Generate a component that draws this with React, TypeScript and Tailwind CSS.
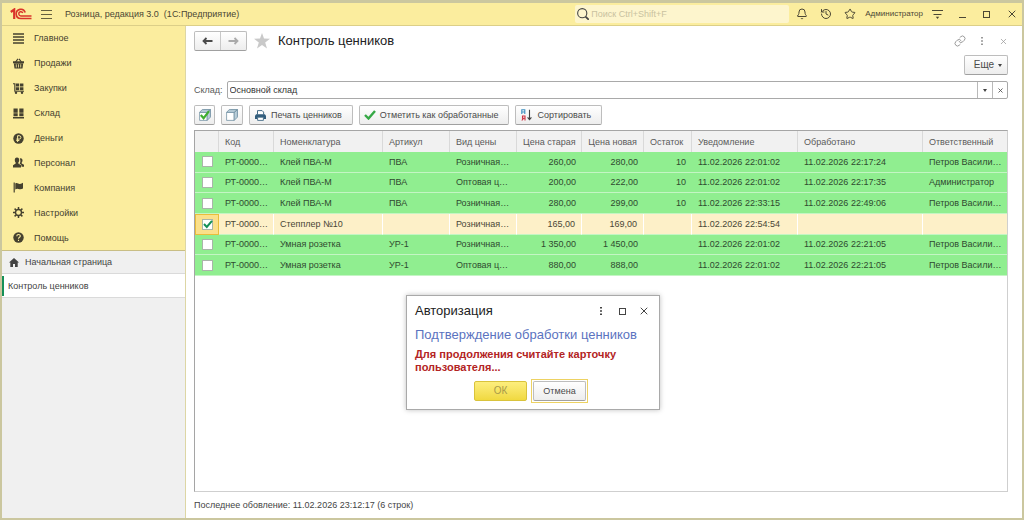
import React, { useState } from "react";
import { Bell, History, Link, Star, X } from "lucide-react";

type Row = {
  id: number;
  name: string;
  article: string;
  priceType: string;
  oldPrice: string;
  newPrice: string;
  rest: string;
  notified: string;
  processed: string;
  user: string;
};

const rows: Row[] = [
  { id: 1, name: "Клей ПВА-М", article: "ПВА", priceType: "Розничная…", oldPrice: "260,00", newPrice: "280,00", rest: "10", notified: "11.02.2026 22:01:02", processed: "11.02.2026 22:17:24", user: "Петров Васили…" },
  { id: 2, name: "Клей ПВА-М", article: "ПВА", priceType: "Оптовая ц…", oldPrice: "200,00", newPrice: "222,00", rest: "10", notified: "11.02.2026 22:01:02", processed: "11.02.2026 22:17:35", user: "Администратор" },
  { id: 3, name: "Клей ПВА-М", article: "ПВА", priceType: "Розничная…", oldPrice: "280,00", newPrice: "299,00", rest: "10", notified: "11.02.2026 22:33:15", processed: "11.02.2026 22:49:06", user: "Петров Васили…" },
  { id: 4, name: "Степплер №10", article: "", priceType: "Розничная…", oldPrice: "165,00", newPrice: "169,00", rest: "", notified: "11.02.2026 22:54:54", processed: "", user: "" },
  { id: 5, name: "Умная розетка", article: "УР-1", priceType: "Розничная…", oldPrice: "1 350,00", newPrice: "1 450,00", rest: "", notified: "11.02.2026 22:01:02", processed: "11.02.2026 22:21:05", user: "Петров Васили…" },
  { id: 6, name: "Умная розетка", article: "УР-1", priceType: "Оптовая ц…", oldPrice: "880,00", newPrice: "888,00", rest: "", notified: "11.02.2026 22:01:02", processed: "11.02.2026 22:21:05", user: "Петров Васили…" },
];

const columns = [
  { title: "", width: "w-[24px]", right: false },
  { title: "Код", width: "w-[55px]", right: false },
  { title: "Номенклатура", width: "w-[109px]", right: false },
  { title: "Артикул", width: "w-[67px]", right: false },
  { title: "Вид цены", width: "w-[67px]", right: false },
  { title: "Цена старая", width: "w-[65px]", right: true },
  { title: "Цена новая", width: "w-[62px]", right: true },
  { title: "Остаток", width: "w-[48px]", right: false },
  { title: "Уведомление", width: "w-[106px]", right: false },
  { title: "Обработано", width: "w-[125px]", right: false },
  { title: "Ответственный", width: "", right: false },
];

const sections = [
  { title: "Главное", icon: <path d="M0 1h11M0 4h11M0 7h11M0 10h11" stroke="currentColor" strokeWidth="1.6" /> },
  {
    title: "Продажи",
    icon: (
      <>
        <path d="M2.5 4 5 .8M8.5 4 6 .8" stroke="currentColor" strokeWidth="1.2" />
        <path d="M0 3.2h11v2H0zM.8 5.6h9.4L9.5 10.5h-8z" fill="currentColor" />
        <path d="M3.3 6.3v3.2M5.5 6.3v3.2M7.7 6.3v3.2" stroke="#fbed9e" strokeWidth=".8" />
      </>
    ),
  },
  {
    title: "Закупки",
    icon: (
      <>
        <path d="M0 .8h1.8v7.4H11" fill="none" stroke="currentColor" strokeWidth="1.1" />
        <path d="M2.8.5h3.4v3H2.8zM7 .5h3.4v3H7zM2.8 4.2h3.4v3H2.8zM7 4.2h3.4v3H7z" fill="currentColor" />
        <circle cx="3" cy="9.8" r="1.2" fill="currentColor" />
        <circle cx="9" cy="9.8" r="1.2" fill="currentColor" />
      </>
    ),
  },
  {
    title: "Склад",
    icon: <path d="M.5.5h4.2v4.2H.5zM6.3.5h4.2v4.2H6.3zM.5 5.3h4.2v3H.5zM6.3 5.3h4.2v3H6.3zM0 9h11v1.5H0z" fill="currentColor" />,
  },
  {
    title: "Деньги",
    icon: (
      <>
        <circle cx="5.5" cy="5.5" r="5.2" fill="currentColor" />
        <path d="M4.6 9V2.7h1.6a1.7 1.7 0 0 1 0 3.4H3.3M3.3 7.5h3" fill="none" stroke="#fbed9e" />
      </>
    ),
  },
  {
    title: "Персонал",
    icon: (
      <>
        <path d="M7.6 1.2c1.4 0 2 1 1.9 2.3 0 1-.5 1.6-.8 2v1l2.3 1.2v2.1H8.6c0-2-.6-2.3-2-3 .8-1 1.2-3.7.2-5.4z" fill="currentColor" />
        <path d="M4 .5c1.6 0 2.300 1.200 2.200 2.700 0 1.200-.6 2-.9 2.400v1l2.700 1.600v2.300H0V8.200l2.700-1.600v-1c-.4-.4-.9-1.200-.9-2.400C1.700 1.700 2.400.5 4 .5z" fill="currentColor" />
      </>
    ),
  },
  {
    title: "Компания",
    icon: (
      <>
        <path d="M1.2.5v10" stroke="currentColor" strokeWidth="1.2" />
        <path d="M2.3 1.5c2-1.2 3 .8 4.7.5C8.2 1.8 9 1.2 10 .8v5.7c-1.2.6-2.3 1-3.5.7-1.5-.4-2.5-.8-4.2.2z" fill="currentColor" />
      </>
    ),
  },
  {
    title: "Настройки",
    icon: (
      <>
        <circle cx="5.5" cy="5.5" r="3" fill="none" stroke="currentColor" strokeWidth="1.4" />
        <path d="M5.5 0v2M5.5 9v2M0 5.5h2M9 5.5h2M1.6 1.6 3 3M8 8l1.4 1.4M1.6 9.4 3 8M8 3l1.4-1.4" stroke="currentColor" strokeWidth="1.5" />
      </>
    ),
  },
  {
    title: "Помощь",
    icon: (
      <>
        <circle cx="5.5" cy="5.5" r="5.2" fill="currentColor" />
        <path d="M3.8 4.2c0-2.3 3.5-2.3 3.5-.2 0 1.3-1.8 1.3-1.8 2.7M5.5 7.7v1.2" fill="none" stroke="#fbed9e" strokeWidth="1.1" />
      </>
    ),
  },
];

const buttonStyle =
  "h-5 flex items-center rounded-xs border border-[#bdbdbd] border-b-[#a0a0a0] bg-linear-to-b from-white to-[#ededed] text-[#4a4a4a]";

function Logo() {
  return (
    <svg className="w-[22px] h-3" viewBox="0 0 22 12" fill="none" stroke="#d9342b">
      <path d="M.8 4 4.200 1.500V11" strokeWidth="2.200" />
      <path d="M15.200 4.500A4.600 4.600 0 1 0 10.800 10.500H21.500" strokeWidth="1.600" />
      <path d="M12.800 5A2.100 2.100 0 1 0 10.800 7.900H21.500" strokeWidth="1.500" />
    </svg>
  );
}

function Cubes({ checked }: { checked?: boolean }) {
  return (
    <svg className="w-3 h-3" viewBox="0 0 12 12" stroke="#7593a5" strokeWidth=".8">
      <path d="M2.600 2.800 4.800.6h6.600v6.800L9 9.600" fill="#c9dbe4" />
      <path d="M.6 3.400h7.600v8H.6z" fill="#fff" />
      <path d="M.6 3.400 3.200.6h8.200L8.200 3.400zM8.200 3.400 11.400.6v7.600l-3.200 3.200z" fill="#b9ced9" />
      {checked && <path d="m1.800 6 2.800 3.200L10 2.200" fill="none" stroke="#3fae2f" strokeWidth="2.200" />}
    </svg>
  );
}

function Printer() {
  return (
    <svg className="w-[11px] h-[11px]" viewBox="0 0 11 11">
      <path d="M2.500 4.500V.6h4.600l1.500 1.500v2.400" fill="#fff" stroke="#456c87" />
      <path d="M1.200 4.200h8.600L11 5.400V9H0V5.400z" fill="#315d7d" />
      <path d="M2.600 7.200h5.800v3.200H2.600z" fill="#fff" stroke="#456c87" strokeWidth=".9" />
    </svg>
  );
}

function SortIcon() {
  return (
    <svg className="w-3 h-3" viewBox="0 0 12 12" fill="none">
      <path d="M.8 5V.8h3V5M.8 3h3" stroke="#3c8fc0" strokeWidth="1.100" />
      <path d="M4 11.500V7H1.500v2.300H4M2.500 9.300.8 11.500" stroke="#cc3344" strokeWidth="1.100" />
      <path d="M8.500.8v9.700M6.600 8.300l1.900 2.400 1.900-2.400" stroke="#444" strokeWidth="1.100" />
    </svg>
  );
}

function Arrow({ className }: { className: string }) {
  return (
    <svg className={className} viewBox="0 0 11 8" fill="none" stroke="currentColor" strokeWidth="1.800">
      <path d="M10.500 4H1.500M4.500 1 1.500 4l3 3" />
    </svg>
  );
}

function Caret() {
  return <svg className="w-1 h-[3px]" viewBox="0 0 4 3"><path d="M0 0h4L2 3z" fill="#444" /></svg>;
}

function Dots({ className }: { className: string }) {
  return (
    <svg className={className} viewBox="0 0 2 8" fill="currentColor">
      <path d="M0 0h2v1.500H0zM0 3.200h2v1.500H0zM0 6.400h2v1.500H0z" />
    </svg>
  );
}

function TitleBar() {
  return (
    <header className="h-[23px] shrink-0 flex items-center pl-2 pr-1 bg-[#fbed9e] border-b border-[#dccf88]">
      <Logo />
      <button aria-label="Меню" className="ml-2 w-3 flex justify-center">
        <svg className="w-[11px] h-[9px]" viewBox="0 0 11 9" stroke="#65603f"><path d="M0 .5h11M0 4.500h11M0 8.500h11" /></svg>
      </button>
      <h1 className="ml-[13px] grow whitespace-pre text-[#4b4734]">Розница, редакция 3.0  (1С:Предприятие)</h1>
      <label className="w-[214px] h-[18px] flex items-center gap-0.5 pl-0.5 rounded-xs bg-[#fdf5cd]">
        <svg className="w-3 h-3" viewBox="0 0 11 11" fill="none" stroke="#444"><circle cx="4.800" cy="4.800" r="4.200" /><path d="m7.800 7.800 3 3" strokeWidth="1.600" /></svg>
        <input aria-label="Поиск" placeholder="Поиск Ctrl+Shift+F" className="grow min-w-0 outline-none placeholder:text-[#c9c2a0]" />
      </label>
      <div className="flex items-center text-[#4b4734]">
        <button aria-label="Уведомления" className="ml-[7px]"><Bell size={12} strokeWidth={2} /></button>
        <button aria-label="История" className="ml-3"><History size={12} strokeWidth={2} /></button>
        <button aria-label="Избранное" className="ml-3"><Star size={12} strokeWidth={2} /></button>
        <button className="ml-[9px] text-[8px]">Администратор</button>
        <button aria-label="Сервис" className="ml-[9px]">
          <svg className="w-[11px] h-[9px]" viewBox="0 0 11 9"><path d="M0 .5h11M1.500 4.500h8" stroke="currentColor" /><path d="M3.800 6.800h3.400L5.500 9z" fill="currentColor" /></svg>
        </button>
        <button aria-label="Свернуть" className="ml-4">
          <svg className="w-[7px] h-[7px]" viewBox="0 0 7 7" stroke="currentColor"><path d="M0 6.500h7" /></svg>
        </button>
        <button aria-label="Развернуть" className="ml-[17px] w-[7px] h-[7px] border border-current" />
        <button aria-label="Закрыть" className="ml-4"><X size={12} strokeWidth={2} /></button>
      </div>
    </header>
  );
}

function Sidebar() {
  return (
    <aside className="w-[184px] shrink-0 flex flex-col bg-[#f0f0f0] border-r border-[#ddd6a4]">
      <nav className="h-[225px] flex flex-col bg-[#fbed9e] border-b border-[#c9be85]">
        {sections.map((section) => (
          <a key={section.title} href="#" className="flex-1 flex items-center gap-[10px] pl-[11px] text-[#45412f]">
            <svg className="w-[11px] h-[11px]" viewBox="0 0 11 11">{section.icon}</svg>
            {section.title}
          </a>
        ))}
      </nav>
      <a href="#" className="h-[23px] flex items-center gap-[6px] pl-[7px] text-[#444] border-b border-[#dadada]">
        <svg className="w-[10px] h-[9px]" viewBox="0 0 10 9" fill="#444"><path d="M5 0 0 4.500h1.300V9H4V6h2v3h2.700V4.500H10z" /></svg>
        Начальная страница
      </a>
      <a href="#" className="h-6 flex items-center gap-1 bg-white text-[#444] border-b border-[#dadada]">
        <span className="w-0.5 h-5 bg-[#159058]" />
        Контроль ценников
      </a>
    </aside>
  );
}

function PriceTable() {
  const [checked, setChecked] = useState<number[]>([4]);

  const toggle = (id: number) =>
    setChecked((prev) => (prev.includes(id) ? prev.filter((x) => x !== id) : [...prev, id]));

  return (
    <div className="grow mt-[5px] border border-[#cfcfcf] border-l-[#a5a5a5] border-t-[#a5a5a5]">
      <table className="w-full h-[145px] table-fixed border-separate border-spacing-0 text-left">
        <thead>
          <tr className="h-[21px] bg-[#f1f1f1] text-[#5a5a5a]">
            {columns.map((col, i) => (
              <th
                key={i}
                className={`${col.width} ${col.right ? "text-right" : ""} px-[6px] font-normal whitespace-nowrap border-r border-[#d9d9d9] last:border-r-0`}
              >
                {col.title}
              </th>
            ))}
          </tr>
        </thead>
        <tbody>
          {rows.map((row) => {
            const active = row.id === 4;
            const line = active ? "border-r border-r-white last:border-r-0" : "";
            return (
              <tr
                key={row.id}
                className={active ? "bg-[#fdf0c8] text-[#4a4636]" : "bg-[#90ee90] text-[#2f4a2f]"}
              >
                <td className={`p-0 border-b ${active ? "bg-[#fbe08a] border border-[#e9bd3a]" : "border-[#c4f5c4]"}`}>
                  <input
                    type="checkbox"
                    aria-label={row.name}
                    checked={checked.includes(row.id)}
                    onChange={() => toggle(row.id)}
                    className="peer sr-only"
                    id={`row-${row.id}`}
                  />
                  <label htmlFor={`row-${row.id}`} className="block w-[11px] h-[11px] mx-auto bg-white border border-[#a9b5a9]">
                    {checked.includes(row.id) && (
                      <svg className="w-[10px] h-[9px]" viewBox="0 0 10 9" fill="none" stroke="#159058" strokeWidth="2"><path d="m1 4 2.800 3L9 .8" /></svg>
                    )}
                  </label>
                </td>
                {[
                  "РТ-0000…",
                  row.name,
                  row.article,
                  row.priceType,
                  row.oldPrice,
                  row.newPrice,
                  row.rest,
                  row.notified,
                  row.processed,
                  row.user,
                ].map((value, i) => (
                  <td
                    key={i}
                    className={`px-[6px] py-0 whitespace-nowrap border-b border-b-[#c4f5c4] ${line} ${i >= 4 && i <= 6 ? "text-right" : ""}`}
                  >
                    {value}
                  </td>
                ))}
              </tr>
            );
          })}
        </tbody>
      </table>
    </div>
  );
}

function AuthDialog() {
  return (
    <div
      role="dialog"
      aria-label="Авторизация"
      className="absolute left-[406px] top-[295px] w-[254px] h-[115px] px-2 pt-[7px] flex flex-col bg-white border border-[#a9a9a9] shadow-[0_0_5px_rgba(0,0,0,0.25)]"
    >
      <div className="flex items-center text-[#444]">
        <h2 className="grow text-[13px] leading-4 text-[#222]">Авторизация</h2>
        <button aria-label="Еще"><Dots className="w-0.5 h-2" /></button>
        <button aria-label="Развернуть" className="ml-[17px] w-[7px] h-[7px] border border-current" />
        <button aria-label="Закрыть" className="ml-3 mr-px"><X size={12} strokeWidth={2} /></button>
      </div>
      <h3 className="mt-2 text-[13px] leading-4 text-[#5b73c0] whitespace-nowrap">Подтверждение обработки ценников</h3>
      <p className="mt-[5px] text-[11px] leading-[13px] font-bold text-[#b32424]">
        Для продолжения считайте карточку пользователя...
      </p>
      <div className="mt-[5px] flex justify-center items-center gap-1 pr-1">
        <button className="w-[53px] h-5 rounded-xs border border-[#d9c33c] bg-linear-to-b from-[#fdee7c] to-[#f0d93f] text-[10px] text-[#a89a4a]">ОК</button>
        <span className="p-px border border-[#edd262]">
          <button className={`${buttonStyle} w-[53px] justify-center`}>Отмена</button>
        </span>
      </div>
    </div>
  );
}

export default function App() {
  return (
    <div className="relative min-h-screen flex flex-col pt-[3px] pl-0.5 pr-0.5 pb-0.5 bg-[#cbc79f] text-[9px] leading-3 font-['Liberation_Sans',Arial,sans-serif]">
      <TitleBar />
      <div className="grow flex bg-white">
        <Sidebar />
        <main className="grow min-w-0 flex flex-col pl-2 pr-[14px] pt-[5px]">
          <div className="flex items-center">
            <div className={`${buttonStyle} w-[53px]`}>
              <button aria-label="Назад" className="flex-1 flex justify-center"><Arrow className="w-[11px] h-2" /></button>
              <span className="w-px self-stretch bg-[#c8c8c8]" />
              <button aria-label="Вперед" className="flex-1 flex justify-center text-[#aaa]"><Arrow className="w-[11px] h-2 rotate-180" /></button>
            </div>
            <svg className="ml-[7px] w-4 h-4" viewBox="0 0 16 16" fill="#c9c9c9"><path d="m8 0 2 5.600 6 .2-4.800 3.700L13 15.500 8 12l-5 3.500 1.800-6L0 5.800l6-.2z" /></svg>
            <h2 className="ml-2 grow text-[13px] leading-4 text-[#222]">Контроль ценников</h2>
            <div className="flex items-center text-[#9a9a9a]">
              <button aria-label="Ссылка"><Link size={12} strokeWidth={2} /></button>
              <button aria-label="Действия" className="ml-[15px]"><Dots className="w-0.5 h-2" /></button>
              <button aria-label="Закрыть" className="ml-4"><X size={9} strokeWidth={2} /></button>
            </div>
          </div>
          <button className={`${buttonStyle} w-[44px] mt-1 self-end justify-center gap-1 pl-1 text-[10px]`}>Еще <Caret /></button>
          <div className="mt-[6px] flex items-center gap-1">
            <label htmlFor="store" className="text-[#5a5a5a]">Склад:</label>
            <div className="grow h-[18px] flex rounded-xs border border-[#a9a9a9]">
              <input id="store" defaultValue="Основной склад" className="grow min-w-0 px-0.5 text-[#333] outline-none" />
              <button aria-label="Выбрать" className="w-[15px] flex items-center justify-center border-l border-[#b9b9b9]"><Caret /></button>
              <button aria-label="Очистить" className="w-[15px] flex items-center justify-center border-l border-[#b9b9b9] text-[#555]"><X size={7} strokeWidth={3} /></button>
            </div>
          </div>
          <div className="mt-[6px] flex gap-[6px]">
            <button aria-label="Отметить все" className={`${buttonStyle} w-[21px] justify-center`}><Cubes checked /></button>
            <button aria-label="Снять отметки" className={`${buttonStyle} w-[22px] justify-center`}><Cubes /></button>
            <button className={`${buttonStyle} gap-[5px] pl-[5px] pr-[10px]`}><Printer />Печать ценников</button>
            <button className={`${buttonStyle} gap-1 pl-1 pr-[10px]`}>
              <svg className="w-3 h-[10px]" viewBox="0 0 12 10" fill="none" stroke="#35a845" strokeWidth="2.400"><path d="m1 5 3.500 3.500L11 1" /></svg>
              Отметить как обработанные
            </button>
            <button className={`${buttonStyle} gap-1 pl-[5px] pr-[10px]`}><SortIcon />Сортировать</button>
          </div>
          <PriceTable />
          <footer className="h-[26px] flex items-center text-[#444]">Последнее обовление: 11.02.2026 23:12:17 (6 строк)</footer>
        </main>
      </div>
      <AuthDialog />
    </div>
  );
}
